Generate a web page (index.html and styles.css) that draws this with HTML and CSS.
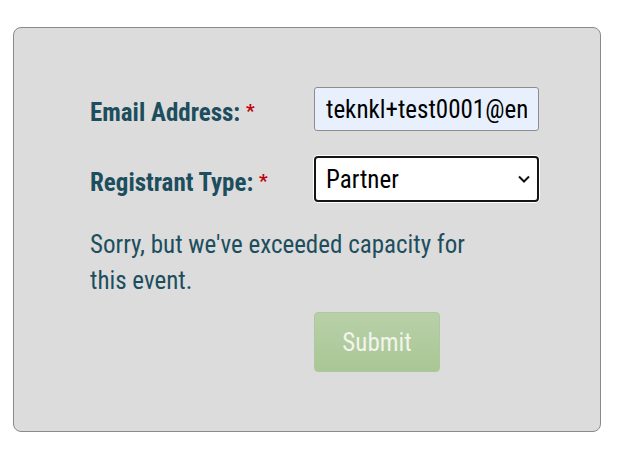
FILE: index.html
```html
<!DOCTYPE html>
<html lang="en">
<head>
  <meta charset="UTF-8" />
  <meta name="viewport" content="width=device-width, initial-scale=1.0"/>
  <title>Event Registration</title>
  <link rel="stylesheet" href="styles.css">
</head>
<body>

  <form class="reg-form">
    <div class="row">
      <label class="label" for="email">Email Address: <span class="req">*</span></label>
      <input class="field field-email" id="email" type="text" value="teknkl+test0001@enterprise.example">
    </div>

    <div class="row">
      <label class="label" for="type">Registrant Type: <span class="req">*</span></label>
      <select class="field field-select" id="type">
        <option>Partner</option>
        <option>Customer</option>
      </select>
    </div>

    <p class="message">Sorry, but we've exceeded capacity for this event.</p>

    <div class="actions">
      <button class="submit" type="button" disabled>Submit</button>
    </div>
  </form>

</body>
</html>
```

FILE: styles.css
```css
body {
  margin: 0;
  padding: 27px 18px 0 13px;
  background: #fff;
  font-family: 'Roboto Condensed', 'Roboto', sans-serif;
  font-stretch: condensed;
}

.reg-form {
  width: 588px;
  height: 405px;
  box-sizing: border-box;
  background: #dcdcdc;
  border: 1px solid #8a8a8a;
  border-radius: 8px;
  padding: 59px 0 0 76px;
}

.row {
  display: grid;
  grid-template-columns: 224px 225px;
  align-items: center;
  margin-bottom: 25px;
}

.label {
  color: #1d4e5e;
  font-weight: bold;
  font-size: 25px;
  position: relative;
  top: 3px;
}

.req {
  color: #c0000c;
  font-size: 19px;
  vertical-align: 4px;
}

.field {
  box-sizing: border-box;
  width: 225px;
  font-family: inherit;
  font-stretch: condensed;
  font-size: 25px;
  color: #000;
}

.field-email {
  height: 44px;
  background: #e8f0fe;
  border: 1px solid #8d8d8d;
  border-radius: 3px;
  padding: 0 11px;
}

.field-select {
  appearance: none;
  height: 46px;
  background: #fff url("data:image/svg+xml,%3Csvg xmlns='http://www.w3.org/2000/svg' width='12' height='8' viewBox='0 0 12 8'%3E%3Cpath d='M1 1.5l5 5 5-5' fill='none' stroke='%23111' stroke-width='2'/%3E%3C/svg%3E") no-repeat right 7px center;
  border: 2px solid #151515;
  border-radius: 4px;
  box-shadow: 0 0 0 1px #fff;
  padding: 0 10px;
  outline: none;
}

.message {
  margin: 0;
  width: 400px;
  color: #1d4e5e;
  font-size: 25px;
  line-height: 36px;
}

.actions {
  padding: 13px 0 0 224px;
}

.submit {
  width: 126px;
  height: 60px;
  border: 1px solid #adc89c;
  border-radius: 4px;
  background: linear-gradient(#b8d0a8, #a9c795);
  color: #f2f4ec;
  font-family: inherit;
  font-stretch: condensed;
  font-size: 25px;
}
```
